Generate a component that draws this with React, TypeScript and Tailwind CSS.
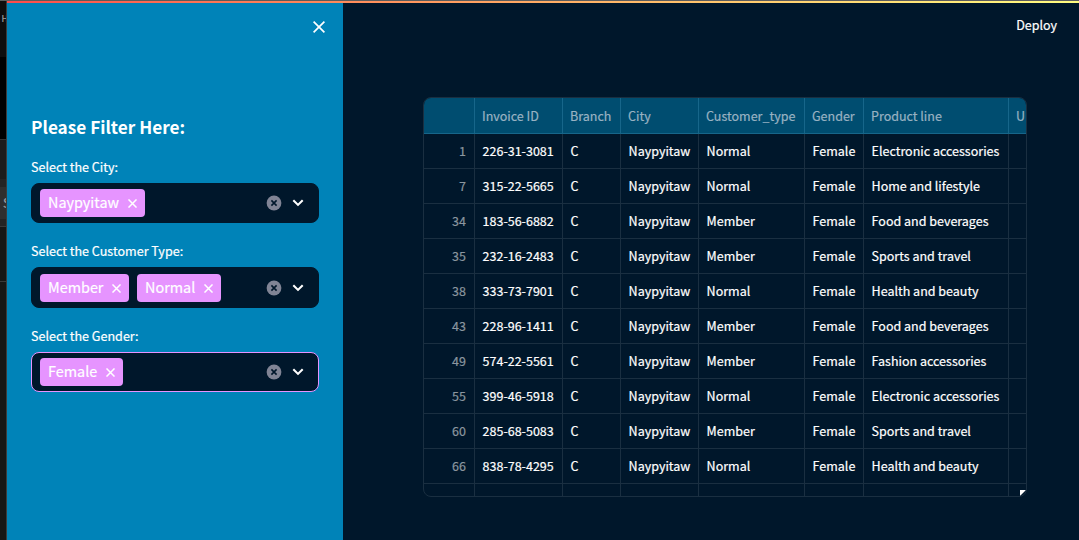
type Filter = { label: string; tags: { text: string; width: string }[]; focused?: boolean; box: string };

const filters: Filter[] = [
  { label: 'Select the City:', tags: [{ text: 'Naypyitaw', width: 'w-[105px]' }], box: 'h-10 mb-[18px]' },
  {
    label: 'Select the Customer Type:',
    tags: [
      { text: 'Member', width: 'w-[89px]' },
      { text: 'Normal', width: 'w-[84px]' },
    ],
    box: 'h-[41px] mb-[18px]',
  },
  { label: 'Select the Gender:', tags: [{ text: 'Female', width: 'w-[83px]' }], focused: true, box: 'h-10' },
];

const headers = ['', 'Invoice ID', 'Branch', 'City', 'Customer_type', 'Gender', 'Product line', 'U'];

const rows = [
  ['1', '226-31-3081', 'Normal', 'Electronic accessories'],
  ['7', '315-22-5665', 'Normal', 'Home and lifestyle'],
  ['34', '183-56-6882', 'Member', 'Food and beverages'],
  ['35', '232-16-2483', 'Member', 'Sports and travel'],
  ['38', '333-73-7901', 'Normal', 'Health and beauty'],
  ['43', '228-96-1411', 'Member', 'Food and beverages'],
  ['49', '574-22-5561', 'Member', 'Fashion accessories'],
  ['55', '399-46-5918', 'Normal', 'Electronic accessories'],
  ['60', '285-68-5083', 'Member', 'Sports and travel'],
  ['66', '838-78-4295', 'Normal', 'Health and beauty'],
].map(([id, invoice, type, product]) => [id, invoice, 'C', 'Naypyitaw', type, 'Female', product, '']);

const columns = 'grid grid-cols-[51px_88px_58px_78px_106px_59px_145px_17px]';

function Cross({ className }: { className: string }) {
  return (
    <svg viewBox="0 0 10 10" className={className} fill="none" stroke="currentColor">
      <path d="M.5 .5l9 9M9.5 .5l-9 9" />
    </svg>
  );
}

function Select({ filter }: { filter: Filter }) {
  return (
    <div>
      <div className="mb-[6px] h-5 text-[12.55px] leading-[20px]">{filter.label}</div>
      <div
        className={`flex items-center gap-2 rounded-lg border bg-[#00172b] pr-3 pl-2 ${filter.box} ${
          filter.focused ? 'border-[#e694ff]' : 'border-[#00172b]'
        }`}
      >
        {filter.tags.map((tag) => (
          <div
            key={tag.text}
            className={`flex h-7 items-center justify-between rounded-[4px] bg-[#e694ff] pr-2 pl-2 text-[14.4px] ${tag.width}`}
          >
            <span className="h-7 leading-[26px]">{tag.text}</span>
            <Cross className="mt-px size-[9px] stroke-[1.7]" />
          </div>
        ))}
        <svg viewBox="0 0 16 16" className="ml-auto size-4">
          <circle cx="8" cy="8" r="7.4" fill="#808495" />
          <path d="M5.4 5.4l5.2 5.2M10.6 5.4l-5.2 5.2" stroke="#00172b" strokeWidth="1.6" />
        </svg>
        <svg viewBox="0 0 16 16" className="size-4" fill="none" stroke="#fff" strokeWidth="2.1">
          <path d="M3.3 5.3L8 9.9l4.7-4.6" />
        </svg>
      </div>
    </div>
  );
}

export default function App() {
  return (
    <div className="flex h-[540px] w-[1079px] flex-col overflow-hidden bg-[#00172b] font-['Noto_Sans_CJK_SC',sans-serif] text-white [-webkit-text-stroke:0.2px]">
      <div className="h-px shrink-0 bg-[#5c5c5c]" />
      <div className="flex min-h-0 flex-1">
        <div className="flex w-[7px] shrink-0 flex-col overflow-hidden border-r border-[#3c3c3c] bg-[#161616] text-[#a0a0a0]">
          <div className="h-14 bg-[#0e0e0e] pt-[10px] pl-[1.5px] text-[9px] leading-4">H</div>
          <div className="h-[82px] bg-black" />
          <div className="h-10 border-t border-[#333] bg-[#1c1c1c]" />
          <div className="h-2 bg-[#242424]" />
          <div className="h-8 bg-[#2f2f2f] pl-[3px] text-[13px] leading-8">S</div>
          <div className="h-[7px] bg-[#242424]" />
          <div className="h-14 border-y border-[#3a3a3a]" />
        </div>
        <div className="flex min-w-0 flex-1 flex-col">
          <div className="h-0.5 shrink-0 bg-linear-to-r from-[#ff4b4b] to-[#fffd80]" />
          <div className="flex min-h-0 flex-1">
            <aside className="w-[336px] shrink-0 bg-[#0083b8] px-6">
              <div className="flex h-[111px] justify-end pt-[18px]">
                <Cross className="-mr-[6px] size-3 stroke-[1.4]" />
              </div>
              <h2 className="mb-[17px] h-[26px] text-[17.2px] leading-[26px] font-bold [-webkit-text-stroke:0]">
                Please Filter Here:
              </h2>
              {filters.map((filter) => (
                <Select key={filter.label} filter={filter} />
              ))}
            </aside>
            <main className="flex flex-1 flex-col">
              <div className="flex h-[94px] justify-end pt-[11px] pr-[22px] text-[12.5px] leading-[21px]">Deploy</div>
              <div className="relative ml-20 h-[400px] w-[604px] overflow-hidden rounded-lg border border-[#1a2f41] text-[12.5px]">
                <div className={`${columns} h-9 bg-[#004d70] text-[#99b2c2]`}>
                  {headers.map((header, i) => (
                    <div
                      key={i}
                      className="overflow-hidden border-b border-[#17668a] pl-[7px] leading-[35px] whitespace-nowrap not-last:border-r"
                    >
                      {header}
                    </div>
                  ))}
                </div>
                {[...rows, Array<string>(8).fill('')].map((row, r) => (
                  <div key={r} className={`${columns} h-[35px]`}>
                    {row.map((value, i) => (
                      <div
                        key={i}
                        className="overflow-hidden border-b border-[#1a2f41] pl-[7.6px] leading-[33px] whitespace-nowrap not-last:border-r first:pr-2 first:text-right first:text-[#8b969f]"
                      >
                        {value}
                      </div>
                    ))}
                  </div>
                ))}
                <svg viewBox="0 0 6 6" className="absolute right-0 bottom-0 size-1.5">
                  <path d="M0 0h6L0 6z" fill="#fff" />
                </svg>
              </div>
            </main>
          </div>
        </div>
      </div>
    </div>
  );
}
